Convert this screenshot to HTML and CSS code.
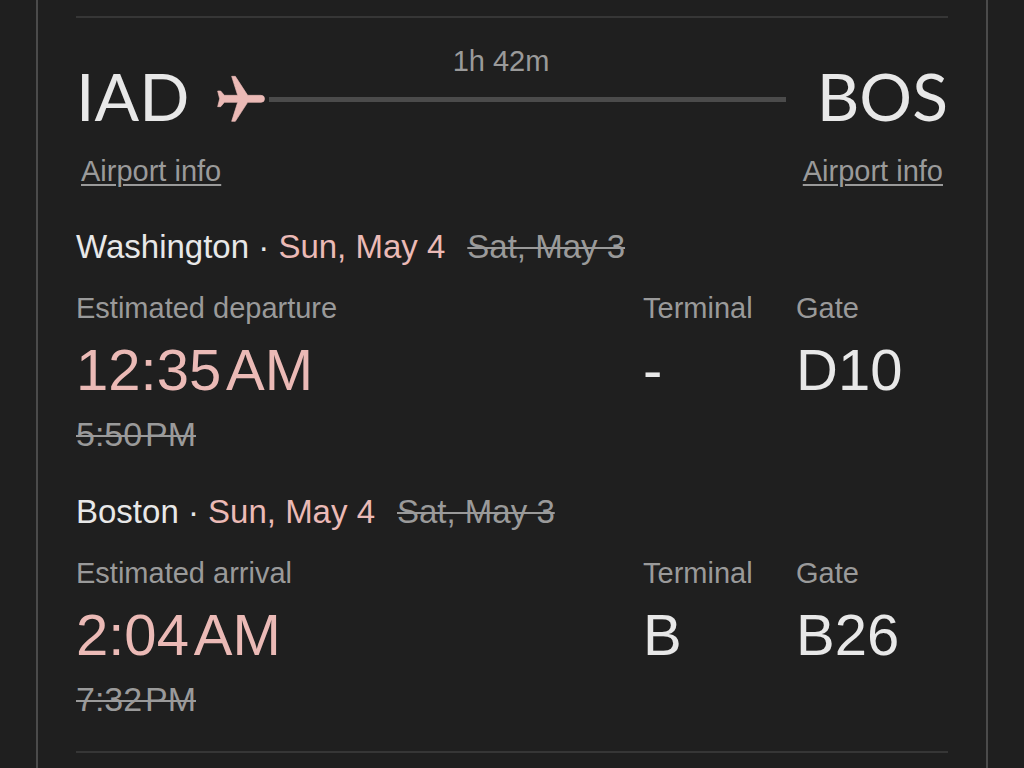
FILE: index.html
```html
<!DOCTYPE html>
<html lang="en">
<head>
<meta charset="utf-8">
<meta name="viewport" content="width=device-width, initial-scale=1">
<title>IAD to BOS</title>
<link rel="stylesheet" href="styles.css">
</head>
<body>
<main class="card">
  <article class="flight">
    <header class="route">
      <h2 class="code">IAD</h2>
      <div class="path">
        <p class="duration">1h 42m</p>
        <div class="track">
          <svg class="plane" viewBox="50 39 150 150" aria-hidden="true">
            <path d="M55 90H64L75 103H115L97 46H108L145 103H185A10.500 10.500 0 0 1 185 124H145L108 181H97L115 124H75L64 137H55L61 113.500Z" fill="#ebbab6" stroke="#ebbab6" stroke-width="2" stroke-linejoin="round"/>
          </svg>
          <span class="line"></span>
        </div>
      </div>
      <h2 class="code">BOS</h2>
    </header>
    <nav class="links">
      <a class="info" href="#iad">Airport info</a>
      <a class="info" href="#bos">Airport info</a>
    </nav>

    <section class="stop" id="iad">
      <h3 class="place">Washington · <span class="late">Sun, May 4</span><s class="old date">Sat, May 3</s></h3>
      <dl class="facts">
        <div class="fact">
          <dt class="label">Estimated departure</dt>
          <dd class="value late">12:35&#8202;AM</dd>
          <dd class="was"><s class="old">5:50&#8202;PM</s></dd>
        </div>
        <div class="fact">
          <dt class="label">Terminal</dt>
          <dd class="value">-</dd>
        </div>
        <div class="fact">
          <dt class="label">Gate</dt>
          <dd class="value">D10</dd>
        </div>
      </dl>
    </section>

    <section class="stop" id="bos">
      <h3 class="place">Boston · <span class="late">Sun, May 4</span><s class="old date">Sat, May 3</s></h3>
      <dl class="facts">
        <div class="fact">
          <dt class="label">Estimated arrival</dt>
          <dd class="value late">2:04&#8202;AM</dd>
          <dd class="was"><s class="old">7:32&#8202;PM</s></dd>
        </div>
        <div class="fact">
          <dt class="label">Terminal</dt>
          <dd class="value">B</dd>
        </div>
        <div class="fact">
          <dt class="label">Gate</dt>
          <dd class="value">B26</dd>
        </div>
      </dl>
    </section>
  </article>
</main>
</body>
</html>
```

FILE: styles.css
```css
* {
  box-sizing: border-box;
  margin: 0;
  padding: 0;
}

body {
  background: #1f1f1f;
  color: #e8e8e8;
  font-family: "Liberation Sans", Arial, sans-serif;
}

.card {
  min-height: 100vh;
  margin: 0 36px;
  padding: 16px 38px 0;
  border: solid #4b4b4b;
  border-width: 0 2px;
}

.flight {
  border: solid #363636;
  border-width: 2px 0;
  padding-bottom: 32px;
}

.route {
  display: flex;
  padding-top: 25px;
}

.code {
  font: 400 66px/80px Lato, sans-serif;
  padding-top: 13px;
}

.path {
  flex: 1;
  padding: 5px 31px 0 27px;
}

.duration {
  color: #9a9a9a;
  font-size: 29px;
  line-height: 26px;
  text-align: center;
}

.track {
  display: flex;
  align-items: center;
  gap: 3px;
}

.plane {
  width: 50px;
  height: 50px;
  flex: none;
}

.line {
  flex: 1;
  height: 5px;
  background: #4b4b4b;
}

.links {
  display: flex;
  justify-content: space-between;
  padding: 17px 5px 0;
}

.info {
  color: #9a9a9a;
  font-size: 29px;
  line-height: 36px;
  text-decoration-thickness: 2px;
  text-underline-offset: 3px;
}

.stop {
  padding-top: 38px;
}

.place {
  font-size: 33px;
  font-weight: 400;
  line-height: 40px;
}

.late {
  color: #ebbab6;
}

.old {
  color: #9a9a9a;
  text-decoration-thickness: 2px;
}

.date {
  margin-left: 22px;
}

.facts {
  display: grid;
  grid-template-columns: 1fr 153px 152px;
  padding-top: 23px;
}

.label {
  color: #9a9a9a;
  font-size: 29px;
  line-height: 36px;
}

.value {
  font-size: 58px;
  line-height: 68px;
  padding-top: 10px;
}

.was {
  font-size: 34px;
  line-height: 40px;
  padding-top: 10px;
}
```
